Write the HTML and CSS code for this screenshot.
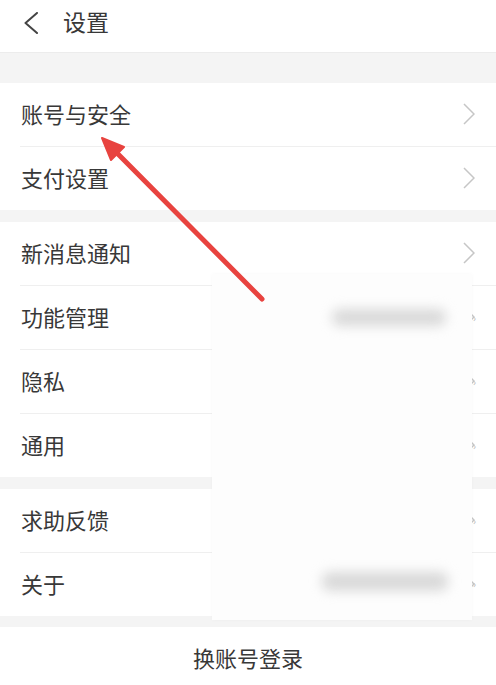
FILE: index.html
```html
<!DOCTYPE html>
<html lang="zh-CN">
<head>
  <meta charset="UTF-8">
  <meta name="viewport" content="width=device-width, initial-scale=1.0">
  <title>设置</title>
  <link rel="stylesheet" href="styles.css">
</head>
<body>
  <div id="settings-page">
    <!-- Top bar -->
    <div class="topbar">
      <svg class="back" width="16" height="22" viewBox="0 0 16 22">
        <path d="M14 1 L2.5 11 L14 21" fill="none" stroke="#444" stroke-width="2" stroke-linecap="round" stroke-linejoin="round"/>
      </svg>
      <span class="title">设置</span>
    </div>

    <!-- Account -->
    <div class="group first">
      <div class="row"><span>账号与安全</span><i class="chev"></i></div>
      <div class="row"><span>支付设置</span><i class="chev"></i></div>
    </div>

    <!-- General -->
    <div class="group">
      <div class="row"><span>新消息通知</span><i class="chev"></i></div>
      <div class="row"><span>功能管理</span><i class="chev"></i></div>
      <div class="row"><span>隐私</span><i class="chev"></i></div>
      <div class="row"><span>通用</span><i class="chev"></i></div>
    </div>

    <!-- Help -->
    <div class="group">
      <div class="row"><span>求助反馈</span><i class="chev"></i></div>
      <div class="row"><span>关于</span><i class="chev"></i></div>
    </div>

    <div class="switch-account">换账号登录</div>

    <!-- faded layer over the right side of the list -->
    <div class="fade-layer">
      <div class="blur-value value-features"></div>
      <div class="blur-value value-about"></div>
      <span class="mini-chev" style="top: 39px">›</span>
      <span class="mini-chev" style="top: 103px">›</span>
      <span class="mini-chev" style="top: 167px">›</span>
      <span class="mini-chev" style="top: 242px">›</span>
      <span class="mini-chev" style="top: 305px">›</span>
    </div>

    <!-- annotation arrow -->
    <svg class="annotation" width="496" height="685" viewBox="0 0 496 685">
      <line x1="262" y1="299" x2="116" y2="152" stroke="#e8433f" stroke-width="5" stroke-linecap="round"/>
      <polygon points="102,138 124,147 111,160" fill="#e8433f" stroke="#e8433f" stroke-width="2" stroke-linejoin="round"/>
    </svg>
  </div>
</body>
</html>
```

FILE: styles.css
```css
/* General Styles */
body {
  margin: 0;
  font-family: "Noto Sans CJK SC", "Noto Sans", sans-serif;
  color: #383838;
  background: #f4f4f4;
}

#settings-page {
  position: relative;
  width: 496px;
  height: 685px;
  overflow: hidden;
  background: #f4f4f4;
}

/* Top bar */
.topbar {
  height: 53px;
  display: flex;
  align-items: center;
  padding-left: 23px;
  padding-bottom: 6px;
  box-sizing: border-box;
  background: #fff;
  border-bottom: 1px solid #ececec;
}

.topbar .back {
  margin-top: 0;
}

.topbar .title {
  margin-left: 24px;
  font-size: 23px;
  line-height: 1;
  margin-top: -3px;
}

/* Groups and rows */
.group {
  margin-top: 12px;
  background: #fff;
}

.group.first {
  margin-top: 30px;
}

.row {
  height: 63px;
  margin-left: 20px;
  padding-left: 1px;
  padding-right: 21px;
  display: flex;
  align-items: center;
  justify-content: space-between;
  font-size: 22px;
}

.row + .row {
  border-top: 1px solid #efefef;
}

.row span {
  margin-top: -4px;
}

.chev {
  width: 12px;
  height: 22px;
  margin-top: -2px;
  background: url("data:image/svg+xml;utf8,<svg xmlns='http://www.w3.org/2000/svg' width='12' height='22' viewBox='0 0 12 22'><path d='M1 1 L11 11 L1 21' fill='none' stroke='%23c6c6c6' stroke-width='1.5'/></svg>") no-repeat;
}

.switch-account {
  margin-top: 11px;
  height: 58px;
  background: #fff;
  display: flex;
  align-items: center;
  justify-content: center;
  padding-top: 2px;
  box-sizing: border-box;
  font-size: 22px;
}

/* Faded overlay */
.fade-layer {
  position: absolute;
  left: 212px;
  top: 274px;
  width: 260px;
  height: 346px;
  background: #fdfdfd;
  box-shadow: 0 0 4px rgba(0, 0, 0, 0.03);
}

.blur-value {
  position: absolute;
  background: #d9d9d9;
  border-radius: 8px;
  filter: blur(6px);
}

.value-features {
  left: 120px;
  top: 35px;
  width: 114px;
  height: 17px;
}

.value-about {
  left: 110px;
  top: 298px;
  width: 126px;
  height: 19px;
}

.mini-chev {
  position: absolute;
  right: -4px;
  font-size: 10px;
  line-height: 10px;
  color: #bcbcbc;
}

.annotation {
  position: absolute;
  top: 0;
  left: 0;
  pointer-events: none;
}
```
